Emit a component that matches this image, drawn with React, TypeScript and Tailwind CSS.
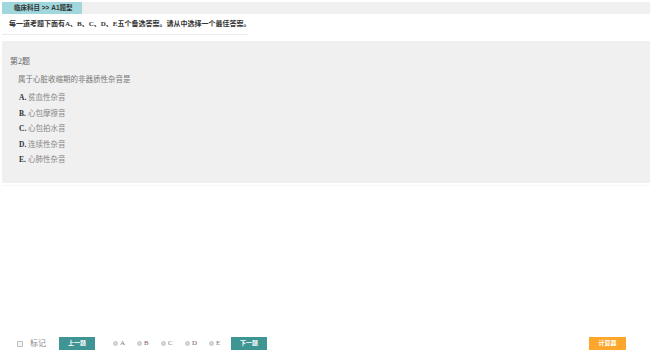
import React from 'react';

// 单选题练习页：顶部科目标签、题干、选项面板、底部操作条
const serif = "font-['Liberation_Serif','Noto_Sans_CJK_SC',serif]";
const sans = "font-['Liberation_Sans','Noto_Sans_CJK_SC',sans-serif]";

const options = [
  { key: 'A', text: '贫血性杂音' },
  { key: 'B', text: '心包摩擦音' },
  { key: 'C', text: '心包拍水音' },
  { key: 'D', text: '连续性杂音' },
  { key: 'E', text: '心肺性杂音' },
];

const radios = [
  { key: 'A', color: 'text-[#777]' },
  { key: 'B', color: 'text-[#7a5a78]' },
  { key: 'C', color: 'text-[#777]' },
  { key: 'D', color: 'text-[#7a5a78]' },
  { key: 'E', color: 'text-[#777]' },
];

export default function App() {
  return (
    <div className={`w-[652px] h-[358px] bg-white flex flex-col ${serif}`}>
      {/* 科目标签 */}
      <div className="mx-[2px] mt-[2px] h-[12px] bg-[#f0f0f0] flex">
        <div className={`w-[80px] bg-[#9fd7dc] flex items-center pl-[12px] text-[6.5px] font-bold text-[#333] whitespace-nowrap ${sans}`}>
          临床科目 &gt;&gt; A1题型
        </div>
      </div>

      {/* 说明 */}
      <div className="ml-[2px] w-[246px] h-[21px] border-b border-[#ececec] flex items-center pl-[7px]">
        <span className="text-[7px] font-bold text-[#333] whitespace-nowrap">
          每一道考题下面有A、B、C、D、E五个备选答案。请从中选择一个最佳答案。
        </span>
      </div>

      {/* 题目面板 */}
      <div className="mx-[2px] mt-[6px] h-[142px] bg-[#f0f0f0] pt-[16px] pl-[8px]">
        <div className="text-[8px] leading-[10px] text-[#666]">第2题</div>
        <div className="mt-[8px] pl-[8px] text-[7.5px] leading-[10px] text-[#777]">属于心脏收缩期的非器质性杂音是</div>
        <div className="mt-[8px] pl-[9px] flex flex-col gap-[5.5px]">
          {options.map(o => (
            <div key={o.key} className="flex items-center text-[7.5px] leading-[10px]">
              <span className="w-[9px] font-bold text-[#333]">{o.key}.</span>
              <span className="text-[#888]">{o.text}</span>
            </div>
          ))}
        </div>
      </div>
      <div className="mx-[2px] mt-[2px] h-[1px] bg-[#f6f6f6]" />

      <div className="flex-1" />

      {/* 底部操作条 */}
      <div className="h-[13px] mb-[8px] flex items-center">
        <span className="ml-[17px] w-[6px] h-[6px] border border-[#c4c4c4] bg-[#f4f4f4]" />
        <span className="ml-[7px] w-[15px] text-[8px] text-[#888] whitespace-nowrap">标记</span>
        <button className={`ml-[14px] w-[36px] h-[13px] bg-[#3f9494] text-white text-[6px] font-bold flex items-center justify-center ${sans}`}>
          上一题
        </button>
        <div className="ml-[18px] flex">
          {radios.map((r, i) => (
            <div key={r.key} className={`${i === 4 ? 'w-[22px]' : 'w-[24px]'} flex items-center`}>
              <span className="w-[5px] h-[5px] rounded-full bg-[#d4d4d4] border border-[#c8c8c8]" />
              <span className={`ml-[2px] text-[7px] ${r.color}`}>{r.key}</span>
            </div>
          ))}
        </div>
        <button className={`w-[36px] h-[13px] bg-[#3f9494] text-white text-[6px] font-bold flex items-center justify-center ${sans}`}>
          下一题
        </button>
        <button className={`ml-auto mr-[26px] w-[37px] h-[13px] bg-[#fca72b] text-white text-[6px] font-bold flex items-center justify-center ${sans}`}>
          计算器
        </button>
      </div>
    </div>
  );
}
